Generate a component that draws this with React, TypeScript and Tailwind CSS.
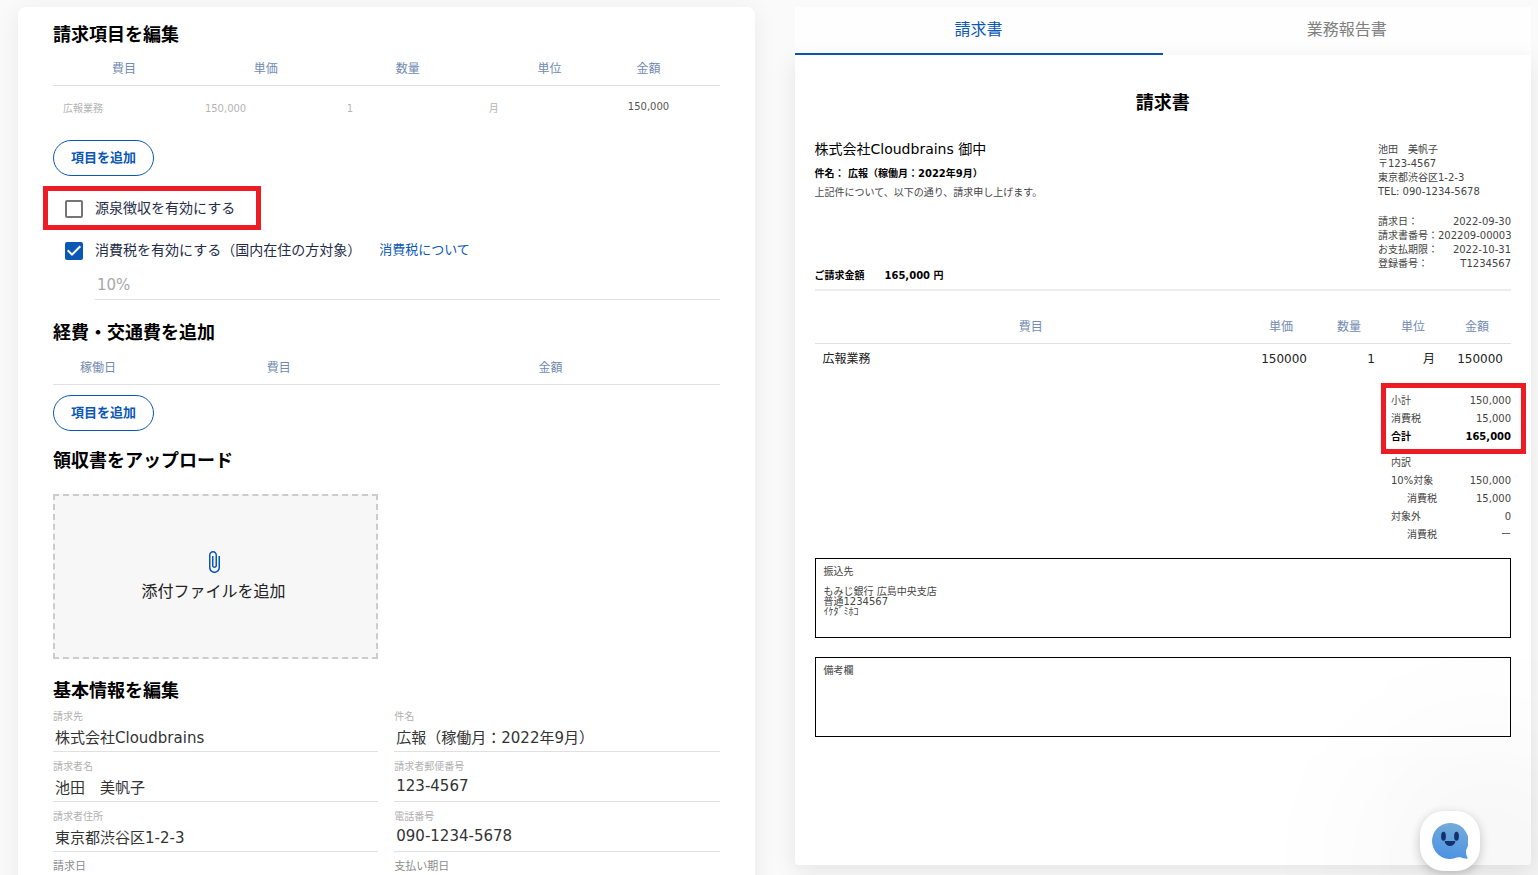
import { useId, useState, type ReactNode } from "react";

const FIELDS = [
  { label: "請求先", value: "株式会社Cloudbrains" },
  { label: "件名", value: "広報（稼働月：2022年9月）" },
  { label: "請求者名", value: "池田　美帆子" },
  { label: "請求者郵便番号", value: "123-4567" },
  { label: "請求者住所", value: "東京都渋谷区1-2-3" },
  { label: "電話番号", value: "090-1234-5678" },
];

const DATE_FIELDS = [
  { label: "請求日", value: "2022-09-30" },
  { label: "支払い期日", value: "2022-10-31" },
];

const INVOICE_META = [
  { label: "請求日：", value: "2022-09-30" },
  { label: "請求書番号：", value: "202209-00003" },
  { label: "お支払期限：", value: "2022-10-31" },
  { label: "登録番号：", value: "T1234567" },
];

const LINE_ITEM = [
  { label: "費目", value: "広報業務" },
  { label: "単価", value: "150,000" },
  { label: "数量", value: "1" },
  { label: "単位", value: "月" },
];

export default function App() {
  return (
    <main className="grid h-screen grid-cols-2 grid-rows-1 gap-10 overflow-hidden bg-[#fafafa] pt-[7px] pr-[7px] pl-[18px] font-[family-name:'DejaVu_Sans','Noto_Sans_CJK_JP',sans-serif] text-black">
      <InvoiceEditor />
      <InvoicePreview />
      <ChatButton />
    </main>
  );
}

function InvoiceEditor() {
  const [withholding, setWithholding] = useState(false);
  const [tax, setTax] = useState(true);

  return (
    <section className="h-max rounded-lg bg-white px-[35px] pt-[15px] pb-10 shadow-[0_4px_24px_rgba(0,0,0,0.07)]">
      <SectionTitle>請求項目を編集</SectionTitle>
      <table className="mt-2 w-full table-fixed">
        <thead>
          <tr className="h-[31px] border-b border-[#e0e0e0]">
            <HeadCell>費目</HeadCell>
            <HeadCell>単価</HeadCell>
            <HeadCell>数量</HeadCell>
            <HeadCell>単位</HeadCell>
            <HeadCell className="w-14">金額</HeadCell>
            <td className="w-[43px]" />
          </tr>
        </thead>
        <tbody>
          <tr className="h-[45px]">
            {LINE_ITEM.map((cell) => (
              <td key={cell.label} className="px-[10px]">
                <input
                  aria-label={cell.label}
                  defaultValue={cell.value}
                  disabled
                  className="block w-full min-w-0 pt-0.5 text-[10px] leading-4 text-[#b4b4b4]"
                />
              </td>
            ))}
            <td className="pb-0.5 text-center text-[10px] leading-4 text-[#555]">150,000</td>
            <td />
          </tr>
        </tbody>
      </table>
      <AddButton />

      <div className="mt-3">
        <div className="relative flex h-[42px] items-center pl-3">
          <Checkbox label="源泉徴収を有効にする" checked={withholding} onChange={setWithholding} />
          <div className="pointer-events-none absolute -top-0.5 -left-[10px] h-11 w-[218px] border-[5px] border-[#ed1c24]" />
        </div>
        <div className="flex h-[42px] items-center gap-[18px] pl-3">
          <Checkbox label="消費税を有効にする（国内在住の方対象）" checked={tax} onChange={setTax} />
          <a href="#tax" className="pb-0.5 text-[13px] leading-5 text-[#0b57b5]">消費税について</a>
        </div>
        <div className="pl-[42px]">
          <input
            aria-label="消費税率"
            defaultValue="10%"
            disabled
            className="block h-7 w-full border-b border-[#e0e0e0] px-0.5 pb-0.5 text-[15px] leading-5 text-[#a8a8a8]"
          />
        </div>
      </div>

      <SectionTitle className="mt-5">経費・交通費を追加</SectionTitle>
      <table className="mt-2 w-full table-fixed">
        <thead>
          <tr className="h-8 border-b border-[#e0e0e0]">
            <HeadCell className="w-[90px]">稼働日</HeadCell>
            <HeadCell>費目</HeadCell>
            <HeadCell>金額</HeadCell>
            <td className="w-[33px]" />
          </tr>
        </thead>
      </table>
      <AddButton />

      <SectionTitle className="mt-[17px]">領収書をアップロード</SectionTitle>
      <div className="mt-[22px] grid grid-cols-2 gap-4">
        <button
          type="button"
          className="flex h-[165px] flex-col items-center justify-center gap-1.5 border-2 border-dashed border-[#ccc] bg-[#f7f7f7] pt-0.5 pr-1 text-base text-[#222]"
        >
          <svg viewBox="0 0 24 24" className="size-6 fill-[#0b57b5]" aria-hidden="true">
            <path d="M16.5 6v11.5c0 2.21-1.79 4-4 4s-4-1.79-4-4V5c0-1.38 1.12-2.5 2.5-2.5s2.5 1.12 2.5 2.5v10.5c0 .55-.45 1-1 1s-1-.45-1-1V6H10v9.5c0 1.38 1.12 2.5 2.5 2.5s2.5-1.12 2.5-2.5V5c0-2.21-1.79-4-4-4S7 2.79 7 5v12.5c0 3.04 2.46 5.5 5.5 5.5s5.5-2.46 5.5-5.5V6h-1.5z" />
          </svg>
          添付ファイルを追加
        </button>
      </div>

      <SectionTitle className="mt-[19px]">基本情報を編集</SectionTitle>
      <div className="grid grid-cols-2 gap-x-4">
        {FIELDS.map((f) => (
          <Field key={f.label} label={f.label} value={f.value} />
        ))}
        {DATE_FIELDS.map((f) => (
          <Field key={f.label} label={f.label} value={f.value} large />
        ))}
      </div>
    </section>
  );
}

function InvoicePreview() {
  return (
    <section className="flex flex-col pb-[10px]">
      <div role="tablist" className="grid h-12 grid-cols-2 bg-[#fefefe] text-base">
        <button type="button" role="tab" aria-selected="true" className="border-b-2 border-[#0b57b5] pb-px text-[#0b57b5]">
          請求書
        </button>
        <button type="button" role="tab" aria-selected="false" className="pb-[3px] text-[#808080]">
          業務報告書
        </button>
      </div>

      <div className="flex-1 rounded-b bg-white px-5 pt-9 shadow-[0_6px_24px_rgba(0,0,0,0.09)]">
        <h1 className="text-center text-lg leading-6 font-bold">請求書</h1>

        <div className="mt-[27px] flex justify-between border-b-2 border-[#ecedf2] pb-1.5 text-[10px] leading-[14px]">
          <div className="flex flex-col">
            <p className="text-sm leading-[14px]">株式会社Cloudbrains 御中</p>
            <p className="mt-[11px] font-bold">件名： 広報（稼働月：2022年9月）</p>
            <p className="mt-[5px] text-[#444]">上記件について、以下の通り、請求申し上げます。</p>
            <p className="mt-auto flex gap-5 font-bold">
              <span>ご請求金額</span>
              <span>165,000 円</span>
            </p>
          </div>
          <div className="mb-3 w-[133px] pt-px text-[#444]">
            <address className="not-italic">
              <p>池田　美帆子</p>
              <p>〒123-4567</p>
              <p>東京都渋谷区1-2-3</p>
              <p className="whitespace-nowrap">TEL: 090-1234-5678</p>
            </address>
            <dl className="mt-4">
              {INVOICE_META.map((m) => (
                <div key={m.label} className="flex justify-between whitespace-nowrap">
                  <dt>{m.label}</dt>
                  <dd>{m.value}</dd>
                </div>
              ))}
            </dl>
          </div>
        </div>

        <table className="mt-5 w-full table-fixed">
          <thead>
            <tr className="h-8 border-b border-[#e0e0e0]">
              <HeadCell>費目</HeadCell>
              <HeadCell className="w-[68px]">単価</HeadCell>
              <HeadCell className="w-[68px]">数量</HeadCell>
              <HeadCell className="w-[60px]">単位</HeadCell>
              <HeadCell className="w-[68px]">金額</HeadCell>
            </tr>
          </thead>
          <tbody>
            <tr className="h-8 text-right text-xs text-[#222]">
              <td className="px-2 text-left">広報業務</td>
              <td className="px-2">150000</td>
              <td className="px-2">1</td>
              <td className="px-2">月</td>
              <td className="px-2">150000</td>
            </tr>
          </tbody>
        </table>

        <div className="relative mt-[17px] ml-auto w-[120px] text-[10px] leading-[18px] text-[#444]">
          <dl>
            <TotalRow label="小計" value="150,000" />
            <TotalRow label="消費税" value="15,000" />
            <TotalRow label="合計" value="165,000" bold />
          </dl>
          <dl className="mt-2">
            <TotalRow label="内訳" value="" />
            <TotalRow label="10%対象" value="150,000" />
            <TotalRow label="消費税" value="15,000" indent />
            <TotalRow label="対象外" value="0" />
            <TotalRow label="消費税" value="ー" indent />
          </dl>
          <div className="pointer-events-none absolute -top-[9px] -left-[10px] h-[71px] w-[145px] border-[5px] border-[#ed1c24]" />
        </div>

        <div className="mt-[14px] h-20 border border-black px-2 pt-2 text-[10px] leading-[10px] text-[#444]">
          <p>振込先</p>
          <p className="mt-[10px]">もみじ銀行 広島中央支店</p>
          <p>普通1234567</p>
          <p>ｲｹﾀﾞﾐﾎｺ</p>
        </div>
        <div className="mt-[19px] h-20 border border-black px-2 pt-2 text-[10px] leading-[10px] text-[#444]">
          <p>備考欄</p>
        </div>
      </div>
    </section>
  );
}

function SectionTitle({ children, className = "" }: { children: ReactNode; className?: string }) {
  return <h2 className={`pt-0.5 text-lg leading-[22px] font-bold ${className}`}>{children}</h2>;
}

function HeadCell({ children, className = "" }: { children: ReactNode; className?: string }) {
  return <th className={`p-0 text-center text-xs font-normal text-[#718bb0] ${className}`}>{children}</th>;
}

function AddButton() {
  return (
    <button
      type="button"
      className="mt-[10px] block h-9 rounded-full border border-[#0b57b5] px-[17px] text-[13px] leading-5 font-bold text-[#0b57b5]"
    >
      項目を追加
    </button>
  );
}

function Checkbox({ label, checked, onChange }: { label: string; checked: boolean; onChange: (v: boolean) => void }) {
  return (
    <label className="flex items-center gap-3 text-sm text-[#1f2d48]">
      <span className="relative size-[18px]">
        <input
          type="checkbox"
          checked={checked}
          onChange={(e) => onChange(e.target.checked)}
          className="peer block size-[18px] appearance-none rounded-xs border-2 border-[#757575] checked:border-[#0b57b5] checked:bg-[#0b57b5]"
        />
        <svg viewBox="0 0 18 18" className="pointer-events-none absolute inset-0 hidden fill-white peer-checked:block" aria-hidden="true">
          <path d="M7 14 2 9l1.41-1.41L7 11.17l7.59-7.59L16 5l-9 9z" />
        </svg>
      </span>
      <span className="pb-0.5">{label}</span>
    </label>
  );
}

function Field({ label, value, large = false }: { label: string; value: string; large?: boolean }) {
  const id = useId();
  return (
    <div className="pt-2">
      <label htmlFor={id} className={`block leading-[14px] ${large ? "text-[11px] text-[#8c8c8c]" : "text-[10px] text-[#b0b0b0]"}`}>
        {label}
      </label>
      <input
        id={id}
        defaultValue={value}
        className="block h-7 w-full border-b border-[#e0e0e0] px-0.5 pb-0.5 text-[15px] leading-5 text-[#333] outline-none"
      />
    </div>
  );
}

function TotalRow({ label, value, bold = false, indent = false }: { label: string; value: string; bold?: boolean; indent?: boolean }) {
  return (
    <div className={`flex justify-between ${bold ? "font-bold text-black" : ""}`}>
      <dt className={indent ? "pl-4" : ""}>{label}</dt>
      <dd>{value}</dd>
    </div>
  );
}

function ChatButton() {
  return (
    <button
      type="button"
      aria-label="チャット"
      className="fixed right-[58px] bottom-1 flex size-[60px] items-center justify-center rounded-3xl bg-white shadow-[0_3px_12px_rgba(0,0,0,0.22),40px_20px_180px_60px_rgba(0,0,0,0.07)]"
    >
      <svg viewBox="0 0 36 36" className="size-9" aria-hidden="true">
        <defs>
          <linearGradient id="bubble" x1="0.6" y1="0" x2="0.4" y2="1">
            <stop offset="0" stopColor="#74acd8" />
            <stop offset="1" stopColor="#4c92e4" />
          </linearGradient>
        </defs>
        <path
          d="M18 0a18 18 0 1 0 7 34.600c1.500-.6 2.800-.6 4.300-.1 1.800.7 3.700 1.300 5.300 1.200.9 0 1.200-.7.800-1.400-1.100-2-1.800-5.200-1.200-7.600A18 18 0 0 0 18 0z"
          fill="url(#bubble)"
        />
        <ellipse cx="11.500" cy="13.300" rx="2.400" ry="4.500" fill="#13316b" />
        <ellipse cx="24.500" cy="13.300" rx="2.400" ry="4.500" fill="#13316b" />
        <path d="M13.200 18h9.600c.4 0 .6.300.5.700-.5 2.600-2.700 4.200-5.300 4.200s-4.800-1.600-5.300-4.200c-.1-.4.100-.7.500-.7z" fill="#13316b" />
      </svg>
    </button>
  );
}
